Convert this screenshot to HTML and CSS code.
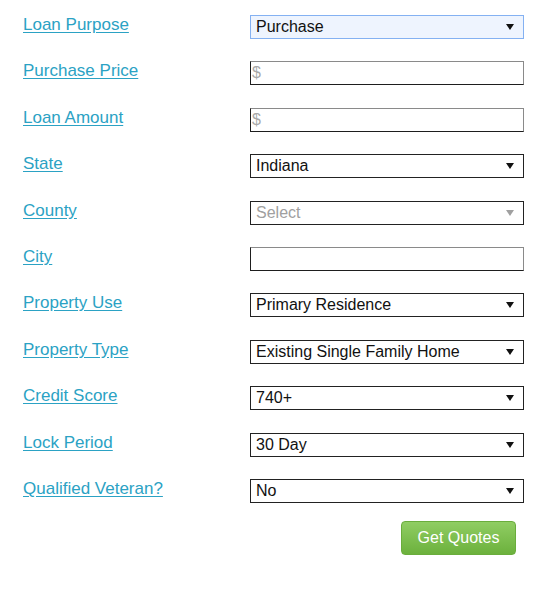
FILE: index.html
```html
<!DOCTYPE html>
<html>
<head>
<meta charset="utf-8">
<link rel="stylesheet" href="styles.css">
</head>
<body>
<form class="quote-form">
  <a class="label" href="#">Loan Purpose</a>
  <div class="field select focused"><span>Purchase</span><svg class="arrow" width="8" height="6" viewBox="0 0 8 6"><path d="M0 0H8L4 6Z"/></svg></div>

  <a class="label" href="#">Purchase Price</a>
  <div class="field input"><span class="placeholder">$</span></div>

  <a class="label" href="#">Loan Amount</a>
  <div class="field input"><span class="placeholder">$</span></div>

  <a class="label" href="#">State</a>
  <div class="field select"><span>Indiana</span><svg class="arrow" width="8" height="6" viewBox="0 0 8 6"><path d="M0 0H8L4 6Z"/></svg></div>

  <a class="label" href="#">County</a>
  <div class="field select disabled"><span>Select</span><svg class="arrow" width="8" height="6" viewBox="0 0 8 6"><path d="M0 0H8L4 6Z"/></svg></div>

  <a class="label" href="#">City</a>
  <div class="field input"></div>

  <a class="label" href="#">Property Use</a>
  <div class="field select"><span>Primary Residence</span><svg class="arrow" width="8" height="6" viewBox="0 0 8 6"><path d="M0 0H8L4 6Z"/></svg></div>

  <a class="label" href="#">Property Type</a>
  <div class="field select"><span>Existing Single Family Home</span><svg class="arrow" width="8" height="6" viewBox="0 0 8 6"><path d="M0 0H8L4 6Z"/></svg></div>

  <a class="label" href="#">Credit Score</a>
  <div class="field select"><span>740+</span><svg class="arrow" width="8" height="6" viewBox="0 0 8 6"><path d="M0 0H8L4 6Z"/></svg></div>

  <a class="label" href="#">Lock Period</a>
  <div class="field select"><span>30 Day</span><svg class="arrow" width="8" height="6" viewBox="0 0 8 6"><path d="M0 0H8L4 6Z"/></svg></div>

  <a class="label" href="#">Qualified Veteran?</a>
  <div class="field select"><span>No</span><svg class="arrow" width="8" height="6" viewBox="0 0 8 6"><path d="M0 0H8L4 6Z"/></svg></div>

  <div class="actions"><button type="button" class="btn">Get Quotes</button></div>
</form>
</body>
</html>
```
FILE: styles.css
```css
html, body {
  margin: 0;
  padding: 0;
  background: #fff;
}
body {
  font-family: "Liberation Sans", Arial, sans-serif;
}
.quote-form {
  display: grid;
  grid-template-columns: 227px 274px;
  row-gap: 22.4px;
  padding: 15px 0 0 23px;
}
.label {
  font-size: 17px;
  line-height: 20px;
  color: #2ba2c4;
  text-decoration: underline;
  text-underline-offset: 2px;
  justify-self: start;
}
.field {
  box-sizing: border-box;
  height: 24px;
  border: 1px solid #1e1e1e;
  border-top-color: #8a8a8a;
  border-right-color: #8a8a8a;
  background: #fff;
  font-size: 16px;
  line-height: 22px;
  color: #111;
  display: flex;
  align-items: center;
  justify-content: space-between;
  padding: 0 9px 0 5px;
}
.field.select {
  border-color: #222;
}
.field.focused {
  background: #eef4fe;
  border-color: #84b1f2;
}
.field.input {
  padding-left: 1px;
}
.placeholder {
  color: #a9a9a9;
}
.arrow {
  fill: #111;
  flex: none;
}
.disabled {
  color: #a0a0a0;
  border-color: #555;
}
.disabled .arrow {
  fill: #a0a0a0;
}
.actions {
  grid-column: 2;
  display: flex;
  justify-content: flex-end;
  padding-right: 8px;
  margin-top: -4px;
}
.btn {
  width: 115px;
  height: 34px;
  border: 1px solid #6aad3c;
  border-radius: 4px;
  background: linear-gradient(#90cd63, #6cb13d);
  color: #fff;
  font-family: "Liberation Sans", Arial, sans-serif;
  font-size: 16px;
  padding: 0;
  cursor: pointer;
}
```
